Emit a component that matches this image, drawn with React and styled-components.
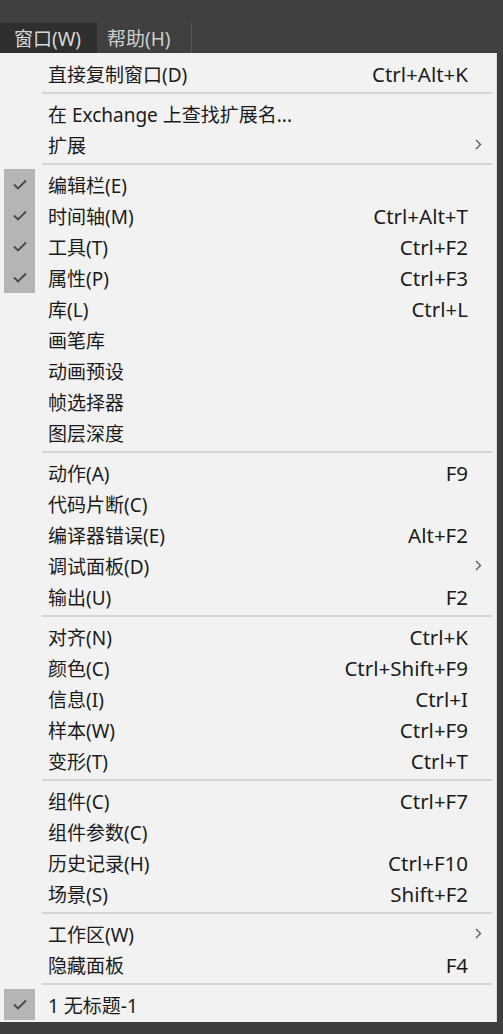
import React from "react";
import styled, { createGlobalStyle } from "styled-components";

const GlobalStyle = createGlobalStyle`
  html, body {
    margin: 0;
    padding: 0;
    background: #3f3f3f;
  }
  body {
    font-family: "Noto Sans", "Noto Sans CJK SC", sans-serif;
  }
`;

// 메뉴 데이터
const sections = [
  [{ label: "直接复制窗口(D)", shortcut: "Ctrl+Alt+K" }],
  [
    { label: "在 Exchange 上查找扩展名..." },
    { label: "扩展", sub: true },
  ],
  [
    { label: "编辑栏(E)", checked: true },
    { label: "时间轴(M)", shortcut: "Ctrl+Alt+T", checked: true },
    { label: "工具(T)", shortcut: "Ctrl+F2", checked: true },
    { label: "属性(P)", shortcut: "Ctrl+F3", checked: true },
    { label: "库(L)", shortcut: "Ctrl+L" },
    { label: "画笔库" },
    { label: "动画预设" },
    { label: "帧选择器" },
    { label: "图层深度" },
  ],
  [
    { label: "动作(A)", shortcut: "F9" },
    { label: "代码片断(C)" },
    { label: "编译器错误(E)", shortcut: "Alt+F2" },
    { label: "调试面板(D)", sub: true },
    { label: "输出(U)", shortcut: "F2" },
  ],
  [
    { label: "对齐(N)", shortcut: "Ctrl+K" },
    { label: "颜色(C)", shortcut: "Ctrl+Shift+F9" },
    { label: "信息(I)", shortcut: "Ctrl+I" },
    { label: "样本(W)", shortcut: "Ctrl+F9" },
    { label: "变形(T)", shortcut: "Ctrl+T" },
  ],
  [
    { label: "组件(C)", shortcut: "Ctrl+F7" },
    { label: "组件参数(C)" },
    { label: "历史记录(H)", shortcut: "Ctrl+F10" },
    { label: "场景(S)", shortcut: "Shift+F2" },
  ],
  [
    { label: "工作区(W)", sub: true },
    { label: "隐藏面板", shortcut: "F4" },
  ],
  [{ label: "1 无标题-1", checked: true }],
];

const CheckIcon = () => (
  <svg width="14" height="11" viewBox="0 0 14 11">
    <polyline
      points="1,5.5 5,9.5 13,1.5"
      fill="none"
      stroke="#474747"
      strokeWidth="1.8"
    />
  </svg>
);

const ChevronIcon = () => (
  <svg width="7" height="11" viewBox="0 0 7 11">
    <polyline
      points="1,1 5.5,5.5 1,10"
      fill="none"
      stroke="#555"
      strokeWidth="1.3"
    />
  </svg>
);

const App = () => {
  return (
    <React.Fragment>
      <GlobalStyle />
      <Page>
        <TopStrip />
        <MenuBar>
          <BarItem active>窗口(W)</BarItem>
          <BarItem>帮助(H)</BarItem>
          <BarDivider />
        </MenuBar>
        <Dropdown>
          {sections.map((items, si) => (
            <React.Fragment key={si}>
              {si > 0 && <Separator />}
              {items.map((item) => (
                <Row key={item.label}>
                  <CheckCell checked={item.checked}>
                    {item.checked && <CheckIcon />}
                  </CheckCell>
                  <Label>{item.label}</Label>
                  {item.shortcut && <Shortcut>{item.shortcut}</Shortcut>}
                  <ArrowCell>{item.sub && <ChevronIcon />}</ArrowCell>
                </Row>
              ))}
            </React.Fragment>
          ))}
        </Dropdown>
      </Page>
    </React.Fragment>
  );
};

const Page = styled.div`
  width: 503px;
  min-height: 1034px;
  background: #3f3f3f;
  overflow: hidden;
`;
const TopStrip = styled.div`
  height: 23px;
  background: #404040;
`;
const MenuBar = styled.div`
  display: flex;
  height: 30px;
  background: #404040;
`;
const BarItem = styled.div`
  display: flex;
  align-items: center;
  padding: ${(p) => (p.active ? "0 16px 0 14px" : "0 20px 0 10px")};
  height: 100%;
  font-size: 19px;
  color: ${(p) => (p.active ? "#d8d8d8" : "#cfcfcf")};
  background: ${(p) => (p.active ? "#2f2f2f" : "transparent")};
`;
const BarDivider = styled.div`
  width: 1px;
  height: 100%;
  background: #555;
`;
const Dropdown = styled.div`
  width: 497px;
  box-sizing: border-box;
  background: #f2f2f2;
  padding: 5px 0 2px;
  border-right: 1px solid #dcdcdc;
`;
const Separator = styled.div`
  height: 2px;
  margin: 3px 4px 4px 42px;
  background: #d6d6d6;
`;
const Row = styled.div`
  display: flex;
  align-items: center;
  height: 31px;
  color: #1a1a1a;
`;
const CheckCell = styled.div`
  display: flex;
  align-items: center;
  justify-content: center;
  width: 31px;
  height: 100%;
  margin-left: 4px;
  margin-right: 13px;
  background: ${(p) => (p.checked ? "#b5b5b5" : "transparent")};
`;
const Label = styled.span`
  flex: 1;
  font-size: 19px;
  white-space: nowrap;
`;
const Shortcut = styled.span`
  font-size: 20.5px;
  white-space: nowrap;
`;
const ArrowCell = styled.div`
  display: flex;
  align-items: center;
  width: 28px;
  padding-left: 7px;
  box-sizing: border-box;
  height: 100%;
`;

export default App;
